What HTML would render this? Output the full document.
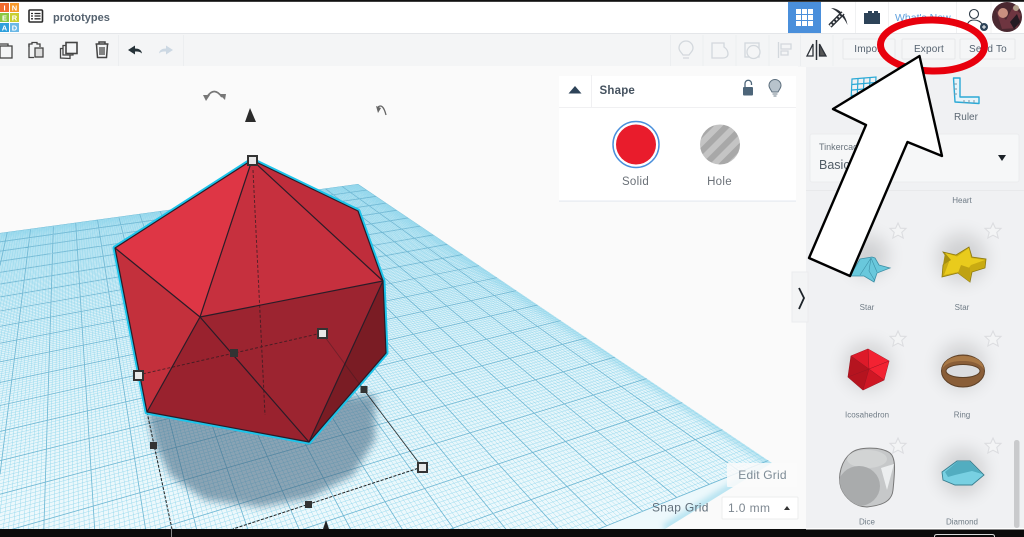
<!DOCTYPE html>
<html lang="en"><head><meta charset="utf-8"><title>prototypes</title>
<style>
html,body{margin:0;padding:0;width:1024px;height:537px;overflow:hidden;background:#fafafa;font-family:"Liberation Sans",sans-serif}
#s{position:absolute;left:0;top:0;display:block;filter:blur(.3px)}
text{font-family:"Liberation Sans",sans-serif}
</style></head><body>
<svg id="s" width="1024" height="537" viewBox="0 0 1024 537" xmlns="http://www.w3.org/2000/svg">
<defs>
<clipPath id="plane"><polygon points="0,233 358,184 772,463 665,529 0,529"/></clipPath>
<clipPath id="dice"><path d="M851,453C858,447 880,446 890,453C896,458 895,470 893,490C892,500 885,505 867,507C855,507 845,498 841,488C837,475 842,460 851,453Z"/></clipPath>
<linearGradient id="pg" x1="0" y1="0" x2="0" y2="1"><stop offset="0" stop-color="#cbeaf4"/><stop offset=".45" stop-color="#e0f3f9"/><stop offset="1" stop-color="#eef9fc"/></linearGradient>
<filter id="b3" x="-10%" y="-10%" width="120%" height="120%"><feGaussianBlur stdDeviation="3"/></filter>
<filter id="b6" x="-30%" y="-30%" width="160%" height="160%"><feGaussianBlur stdDeviation="4"/></filter>
<filter id="b10" x="-50%" y="-50%" width="200%" height="200%"><feGaussianBlur stdDeviation="9"/></filter>
<pattern id="st" width="12" height="12" patternUnits="userSpaceOnUse" patternTransform="rotate(-45)"><rect width="12" height="12" fill="#c4c4c4"/><rect width="12" height="6" fill="#a8a8a8"/></pattern>
<g id="star"><polygon points="0,-8 2.400,-2.800 8,-2.600 3.800,1.400 5.200,7 0,4.200 -5.200,7 -3.800,1.400 -8,-2.600 -2.400,-2.800" fill="#f3f4f5" stroke="#dcdde0" stroke-width="1.100"/></g>
</defs>

<rect width="1024" height="537" fill="#fafafa"/>
<polygon points="0,233 358,184 772,463 665,529 0,529" fill="url(#pg)"/>
<g clip-path="url(#plane)"><path d="M0,233L358,184L772,463L665,529" fill="none" stroke="#6cc6e2" stroke-width="10" opacity=".4" filter="url(#b3)"/></g>
<g id="grid" clip-path="url(#plane)"></g>

<!-- shadow -->
<polygon points="147,412 375,395 375,440 353,475 310,498 260,507 205,500 170,475 155,445" fill="#3f637e" opacity=".56" filter="url(#b6)"/>

<!-- bounding box -->
<g fill="none" stroke="#222" stroke-width="1" stroke-dasharray="3 1.500">
<path d="M147,412L172,529M422,467L233,529"/>
</g>
<path d="M364,390L422,467" fill="none" stroke="#222" stroke-width=".8"/>

<!-- icosahedron -->
<polygon points="252,160 358,211 383,281 386,353 309,442 147,412 115,248" fill="#c6303e" stroke="#1cc4ea" stroke-width="5" stroke-linejoin="round"/>
<polygon points="252,160 115,248 200,317" fill="#de3645"/>
<polygon points="252,160 200,317 383,281" fill="#c6303e"/>
<polygon points="252,160 358,211 383,281" fill="#bf2d3b"/>
<polygon points="115,248 200,317 147,412" fill="#c3303c"/>
<polygon points="200,317 147,412 309,442" fill="#99222e"/>
<polygon points="200,317 383,281 309,442" fill="#9c2430"/>
<polygon points="383,281 386,353 309,442" fill="#7a1c24"/>
<g fill="none" stroke="#2b1c28" stroke-width="1.200" stroke-linejoin="round">
<polygon points="252,160 358,211 383,281 386,353 309,442 147,412 115,248"/>
<path d="M252,160L200,317L115,248M200,317L383,281L252,160M200,317L147,412M200,317L309,442L383,281"/>
</g>
<g fill="none" stroke="#2a1a20" stroke-width="1" stroke-dasharray="3 2" opacity=".7">
<path d="M253,170L265,415M138,375L322,333"/>
<path d="M322,333L364,390" stroke-dasharray="none" opacity=".5"/>
</g>

<!-- handles -->
<g fill="#333"><rect x="230" y="349" width="8" height="8"/><rect x="360.500" y="386" width="7" height="7"/><rect x="150" y="442" width="7" height="7"/><rect x="305" y="501" width="7" height="7"/></g>
<g fill="#e8e8e8" stroke="#333" stroke-width="2"><rect x="248" y="156" width="9" height="9"/><rect x="134" y="371" width="9" height="9"/><rect x="318" y="329" width="9" height="9"/><rect x="418" y="463" width="9" height="9"/></g>

<!-- rotate + cone -->
<path d="M207,97Q214,86 222,97" fill="none" stroke="#777" stroke-width="1.800"/>
<polygon points="203,95 210,95 206,101" fill="#777"/><polygon points="219,94 226,94 225,100" fill="#777"/>
<polygon points="250,108 256,122 245,122" fill="#2b2b2b"/>
<path d="M378,107Q383,103 386,115" fill="none" stroke="#666" stroke-width="1.300"/><polygon points="376,106 381,108 378,113" fill="#666"/>
<polygon points="326,520 329,529 323,529" fill="#222"/>

<!-- header -->
<rect x="0" y="2" width="1024" height="31" fill="#fff"/>
<rect x="0" y="33" width="1024" height="1.500" fill="#e4e6e9"/>
<rect x="0" y="34" width="1024" height="32" fill="#f4f5f6"/>
<rect x="0" y="0" width="1024" height="1.800" fill="#111"/>

<!-- logo -->
<rect x="0" y="3" width="9" height="9" fill="#f26a2e"/><rect x="10" y="3" width="9" height="9" fill="#f79a2b"/>
<rect x="0" y="13" width="9" height="9" fill="#8cc63f"/><rect x="10" y="13" width="9" height="9" fill="#c9cf2e"/>
<rect x="0" y="23" width="9" height="9" fill="#2e9fdc"/><rect x="10" y="23" width="9" height="9" fill="#6bb8e6"/>
<g font-size="7.500" font-weight="700" fill="#fff" text-anchor="middle"><text x="4.500" y="10.500">I</text><text x="14.500" y="10.500">N</text><text x="4.500" y="20.500">E</text><text x="14.500" y="20.500">R</text><text x="4.500" y="30.500">A</text><text x="14.500" y="30.500">D</text></g>

<!-- list icon -->
<rect x="29" y="10" width="13.500" height="12" rx="1" fill="none" stroke="#2b2b2b" stroke-width="1.600"/>
<path d="M31,13.500h2M31,16h2M31,18.800h2M34.500,13.500h6M34.500,16h6M34.500,18.800h6" stroke="#2b2b2b" stroke-width="1.300"/>
<text x="53" y="21" font-size="11" font-weight="700" fill="#55626f">prototypes</text>

<!-- toolbar left -->
<g fill="none" stroke="#444" stroke-width="1.300">
<rect x="0" y="46" width="12" height="12"/><path d="M0,44H8V46"/>
<path d="M29,47V44H32V42.500H37V44H40V47"/><path d="M29,44V57.500H34"/><rect x="35" y="48" width="8" height="9" fill="#ddd"/>
<rect x="66" y="42.500" width="11" height="11" stroke-width="1.600"/><path d="M66,45.500H63V55H73V53.500"/><path d="M62.500,48.500H60.500V58L70,58.500V55"/>
<path d="M95.500,44H108.500M99,44V42H105V44" stroke-width="1.500"/><path d="M96.500,44.500L97.500,57.500H106.500L107.500,44.500" stroke-width="1.500"/><path d="M100,47V55M102,47V55M104,47V55"/>
</g>
<path d="M128,50L135,45.500V48.500C139,48.500 141.500,50 142,53.500C140,51.500 138,51.500 135,51.500V54.500Z" fill="#263238"/>
<path d="M173,50L166,45.500V48.500C162,48.500 159.500,50 159,53.500C161,51.500 163,51.500 166,51.500V54.500Z" fill="#ccd8e3"/>
<path d="M118.500,35V66M183.500,35V66" stroke="#eceef0" stroke-width="1"/>

<!-- toolbar right -->
<g fill="none" stroke="#d3d8dd" stroke-width="1.300">
<path d="M683,55C681,52 679,51 679,48A7,7 0 0 1 693,48C693,51 691,52 689,55ZM683,58H689"/>
<path d="M712,43H724V47C727,49 728,52 728,54C728,57 725,58 723,58H712Z"/>
<rect x="745" y="43" width="14" height="14"/><circle cx="753.500" cy="52" r="6.500" fill="#f4f5f6"/>
<path d="M778.500,42V58M781,44H791V49H781ZM781,51H788V55H781Z"/>
</g>
<path d="M670.500,35V66M703,35V66M736,35V66M769,35V66M800.500,35V66M833,35V66" stroke="#eceef0"/>
<g fill="none" stroke="#2c3138" stroke-width="1.300"><polygon points="813,44 813,56 807,56"/><polygon points="819.500,44 819.500,56 826,56" fill="#555"/></g>
<path d="M816.500,40V60" stroke="#2c3138" stroke-width="1.500"/>

<g fill="#f5f6f7" stroke="#e6e8ea"><rect x="843" y="39" width="52" height="20" rx="1"/><rect x="902" y="39" width="53" height="20" rx="1"/><rect x="960" y="39" width="55" height="20" rx="1"/></g>
<g font-size="10" fill="#55626f" text-anchor="middle" letter-spacing=".2"><text x="869" y="52">Import</text><text x="929" y="52">Export</text><text x="988" y="52">Send To</text></g>

<!-- header right -->
<rect x="788" y="2" width="33" height="31" fill="#4a8fdb"/>
<g fill="#fff"><rect x="796" y="9" width="5" height="5"/><rect x="802" y="9" width="5" height="5"/><rect x="808" y="9" width="5" height="5"/><rect x="796" y="15" width="5" height="5"/><rect x="802" y="15" width="5" height="5"/><rect x="808" y="15" width="5" height="5"/><rect x="796" y="21" width="5" height="5"/><rect x="802" y="21" width="5" height="5"/><rect x="808" y="21" width="5" height="5"/></g>
<path d="M831,8C838,8 846,14 847.500,25C844,17 837,11 831,8Z" fill="#2c3138"/>
<path d="M843,13L830,26" stroke="#2c3138" stroke-width="4.500"/><path d="M843,13L830,26" stroke="#fff" stroke-width="1.800" stroke-dasharray="2 2"/>
<path d="M864,13h4v-2h4v2h2v-2h4v2h2v11h-16Z" fill="#2d4358"/>
<path d="M855.500,2V33M888.500,2V33M956.500,2V33M991,2V33" stroke="#f0f1f2"/>
<text x="895" y="21" font-size="10.500" fill="#5fa0dd">What's New</text>
<circle cx="974" cy="14" r="4.500" fill="none" stroke="#2d3a46" stroke-width="1.100"/><path d="M967,28C967,22 970,20 974,20C978,20 981,22 982,24" fill="none" stroke="#2d3a46" stroke-width="1.100"/>
<circle cx="984" cy="27" r="4" fill="#2d4358"/><path d="M982,27h4M984,25v4" stroke="#fff"/>
<circle cx="1007" cy="17" r="15" fill="#4a2830"/><path d="M996,10L1006,20L1013,7L1021,14L1017,28L1002,29Z" fill="#6e3540"/><circle cx="1003" cy="13" r="5" fill="#c99080"/><path d="M1010,22L1017,14L1020,22L1014,29Z" fill="#241a22"/><circle cx="1016" cy="8" r="3" fill="#b3a08a"/>

<!-- shape panel -->
<rect x="559" y="76" width="237" height="125" fill="#fff"/>
<rect x="559" y="200.500" width="237" height="1.200" fill="#e6eaf0"/>
<path d="M591.500,75V107M559,107.500H796" stroke="#f0f0f2"/>
<polygon points="575,86 581.500,93.500 568.500,93.500" fill="#2d4358"/>
<text x="599.500" y="94" font-size="11.500" font-weight="700" fill="#45525f" letter-spacing=".2">Shape</text>
<rect x="743" y="87" width="10" height="8.500" rx="1" fill="#4d6579"/><path d="M745,87V83.500A3.200,3.200 0 0 1 751.500,83.500V85" fill="none" stroke="#4d6579" stroke-width="1.300"/>
<path d="M772,92C770.500,89 769,88 769,85.500A6,6 0 0 1 781,85.500C781,88 779.500,89 778,92Z" fill="#b8c3cc" stroke="#5d6f7e"/><path d="M772.500,94H777.500M773.500,96H776.500" stroke="#6d7d8a"/>
<circle cx="636" cy="144.500" r="23" fill="#fff" stroke="#4a8fdb" stroke-width="1.500"/>
<circle cx="636" cy="144.500" r="20" fill="#e91c2c"/>
<circle cx="720" cy="144.500" r="20" fill="url(#st)"/>
<g font-size="11.500" fill="#6b7178" text-anchor="middle" letter-spacing=".3"><text x="635.500" y="185">Solid</text><text x="719.500" y="185">Hole</text></g>

<!-- sidebar -->
<rect x="806" y="67" width="218" height="462" fill="#f0f1f3"/>
<rect x="798" y="66" width="226" height="1" fill="#f4f5f6"/>
<rect x="806" y="190" width="218" height="1" fill="#e8e9eb"/>
<g fill="none" stroke="#2aa9d6" stroke-width="1.200"><polygon points="852,79 876,77 875,99 851,101"/><path d="M858,78.500L857,100.500M864,78L863,100M870,77.500L869,99.500M852,84.500L876,82.500M852,90L876,88M851.500,95.500L875,93.500"/></g>
<path d="M953.500,78H960V97H979V103.500L955,102Z" fill="#e8f4f9" stroke="#2aa9d6" stroke-width="1.400" stroke-linejoin="round"/>
<path d="M954,84h3M954,89h3M954,94h3M964,103v-3M969,103v-3M974,103v-3" stroke="#7c98a8"/>
<text x="966" y="120" font-size="10" fill="#5c6873" text-anchor="middle">Ruler</text>
<rect x="810" y="134" width="209" height="48" rx="2" fill="#f6f7f8" stroke="#ebecee"/>
<text x="819" y="150" font-size="9" fill="#69737c">Tinkercad</text>
<text x="819" y="169" font-size="12.500" fill="#515c66">Basic Shapes</text>
<polygon points="998,155 1006,155 1002,161" fill="#1c2228"/>
<text x="962" y="203" font-size="8" fill="#6e7a85" text-anchor="middle">Heart</text>

<rect x="792" y="272" width="16" height="50" fill="#f3f4f5" stroke="#ebecee"/>
<path d="M799,288L804,298L799,309" fill="none" stroke="#1d2329" stroke-width="1.800"/>

<g fill="#000" opacity=".13" filter="url(#b10)"><circle cx="868" cy="256" r="20"/><circle cx="962" cy="258" r="24"/><circle cx="868" cy="366" r="23"/><circle cx="962" cy="366" r="23"/><circle cx="962" cy="472" r="23"/></g>

<g transform="translate(898,231)"><use href="#star"/></g><g transform="translate(993,231)"><use href="#star"/></g>
<g transform="translate(898,339)"><use href="#star"/></g><g transform="translate(993,339)"><use href="#star"/></g>
<g transform="translate(898,446)"><use href="#star"/></g><g transform="translate(993,446)"><use href="#star"/></g>

<!-- thumbnails -->
<polygon points="850,276 860,259 872,257 875,258 879,265 890,268 877,273 874,282 864,276" fill="#69c8dc" stroke="#3d8fa6" stroke-width=".8"/>
<path d="M871,258L869,271L875,281M871,258L877,272M871,258L860,275" fill="none" stroke="#3d8fa6" stroke-width=".6"/>

<polygon points="943,252 956,255 969,247 972,257 986,259 985,268 972,272 970,282 958,273 942,277 943,265 948,259" fill="#c9ab12" stroke="#8d7a10" stroke-width=".8"/>
<polygon points="945,253 957,256.500 969,248 971,258 985,260 971,265 967,270 958,272 944,275 949,262" fill="#e9cb1c"/>
<polygon points="945,253 951,260 943,265" fill="#a68f10"/>
<polygon points="961,265 970,268 970,282 958,273" fill="#bfa212"/>

<polygon points="868,349 889,361 884,380 863,390 848,377 851,356" fill="#e41c2c" stroke="#8f1522" stroke-width=".7"/>
<polygon points="868,349 889,361 884,380 869,369" fill="#f32232"/>
<polygon points="851,356 868,349 869,369" fill="#dd1a29"/>
<polygon points="848,377 851,356 869,369 863,390" fill="#b5141f"/>
<polygon points="869,369 884,380 863,390" fill="#cf1724"/>
<path d="M869,369L851,356M869,369L868,349M869,369L889,361M869,369L884,380M869,369L848,377M869,369L863,390" stroke="#991522" stroke-width=".5" fill="none"/>

<ellipse cx="963" cy="371" rx="21.500" ry="16" fill="#8a5e38" stroke="#5e4127"/>
<path d="M942,369C944,360 952,356 963,356C974,356 983,360 984,369C978,362 970,361 963,361C955,361 947,362 942,369Z" fill="#a87846"/>
<ellipse cx="963" cy="371" rx="17" ry="6.500" fill="#dcdde0" stroke="#5e4127"/>

<path d="M851,453C858,447 880,446 890,453C896,458 895,470 893,490C892,500 885,505 867,507C855,507 845,498 841,488C837,475 842,460 851,453Z" fill="#c6c8c9" stroke="#777" stroke-width="1"/>
<g clip-path="url(#dice)"><ellipse cx="867" cy="459" rx="20" ry="9" fill="#d2d4d4"/><ellipse cx="859" cy="486" rx="21" ry="20" fill="#a9abac"/><polygon points="881,468 894,464 887,490" fill="#eceeef"/></g>

<polygon points="942,472 957,461 970,461 984,475 972,485 955,485 943,480" fill="#78d0e2" stroke="#3a7f90" stroke-width=".9"/>
<polygon points="945,472 957,462 970,462 982,474 972,471 955,475 948,477" fill="#52adc0"/>

<g font-size="8" fill="#707c86" text-anchor="middle"><text x="867" y="310">Star</text><text x="962" y="310">Star</text><text x="867" y="417.500">Icosahedron</text><text x="962" y="417.500">Ring</text><text x="867" y="524.500">Dice</text><text x="962" y="524.500">Diamond</text></g>
<rect x="1014" y="440" width="5.500" height="88" rx="2.500" fill="#c9cacc"/>

<!-- grid controls -->
<rect x="727" y="463" width="70" height="24" rx="1" fill="#fafafa" opacity=".86"/>
<text x="762.500" y="479" font-size="12" fill="#7d8b96" text-anchor="middle" letter-spacing=".2">Edit Grid</text>
<text x="652" y="511.500" font-size="12" fill="#5f6d79" letter-spacing=".3">Snap Grid</text>
<rect x="722" y="497" width="76" height="22" rx="1" fill="#fff" stroke="#eceded"/>
<text x="728" y="512" font-size="12" fill="#7d8790" letter-spacing=".4">1.0 mm</text>
<polygon points="787,506 790,510 784,510" fill="#333"/>

<!-- bottom bar -->
<rect x="0" y="529" width="1024" height="8" fill="#0b0b0b"/>
<rect x="806" y="528" width="218" height="1.500" fill="#fff"/>
<path d="M934.500,537V536.500Q934.500,534.500 937,534.500H992Q994.500,534.500 994.500,536.500V537" fill="none" stroke="#d8d8d8"/>
<path d="M171.500,529V537" stroke="#888"/>

<!-- annotation -->
<ellipse cx="932.500" cy="45.500" rx="52" ry="25.500" fill="none" stroke="#e8000d" stroke-width="7" transform="rotate(1 932 45)"/>
<polygon points="919.500,56 942,156 907.500,142 850,276 809,258 866,125 833,109" fill="#fff" stroke="#000" stroke-width="2.400" stroke-linejoin="round"/>
</svg>
<script>
(function(){
var g=document.getElementById('grid'),ns='http://www.w3.org/2000/svg';
var a=-0.02905,b=-0.0097,A=[358,184],V=[61,-15],W=[2016,-43];
function P(u,v){var w=1+u*a+v*b;return[(A[0]+u*a*V[0]+v*b*W[0])/w,(A[1]+u*a*V[1]+v*b*W[1])/w];}
var N=20,maxV=40,minor='',major='',X1=806,Y1=530;
function seg(p,q){
  var t0=0,t1=1,dx=q[0]-p[0],dy=q[1]-p[1],c=[[-dx,p[0]],[dx,X1-p[0]],[-dy,p[1]],[dy,Y1-p[1]]];
  for(var k=0;k<4;k++){var d=c[k][0],e=c[k][1];
    if(d===0){if(e<0)return '';}
    else{var r=e/d;if(d<0){if(r>t1)return '';if(r>t0)t0=r;}else{if(r<t0)return '';if(r<t1)t1=r;}}}
  return 'M'+(p[0]+t0*dx).toFixed(1)+','+(p[1]+t0*dy).toFixed(1)+'L'+(p[0]+t1*dx).toFixed(1)+','+(p[1]+t1*dy).toFixed(1);
}
for(var i=0;i<=N*10;i++){var u=i/10;var vEnd=Math.min(maxV,(1-0.12+u*a)/-b);var s=seg(P(u,0),P(u,vEnd));if(i%10==0)major+=s;else minor+=s;}
for(var j=0;j<=maxV*10;j++){var v=j/10;var uEnd=Math.min(N,(1-0.12+v*b)/-a);if(uEnd<=0)continue;var s2=seg(P(0,v),P(uEnd,v));if(j%10==0)major+=s2;else minor+=s2;}
var p1=document.createElementNS(ns,'path');p1.setAttribute('d',minor);p1.setAttribute('stroke','#8ed5ec');p1.setAttribute('stroke-width','.42');p1.setAttribute('fill','none');g.appendChild(p1);
var p2=document.createElementNS(ns,'path');p2.setAttribute('d',major);p2.setAttribute('stroke','#6fb8d4');p2.setAttribute('stroke-width','.85');p2.setAttribute('fill','none');g.appendChild(p2);
})();
</script>
</body></html>
